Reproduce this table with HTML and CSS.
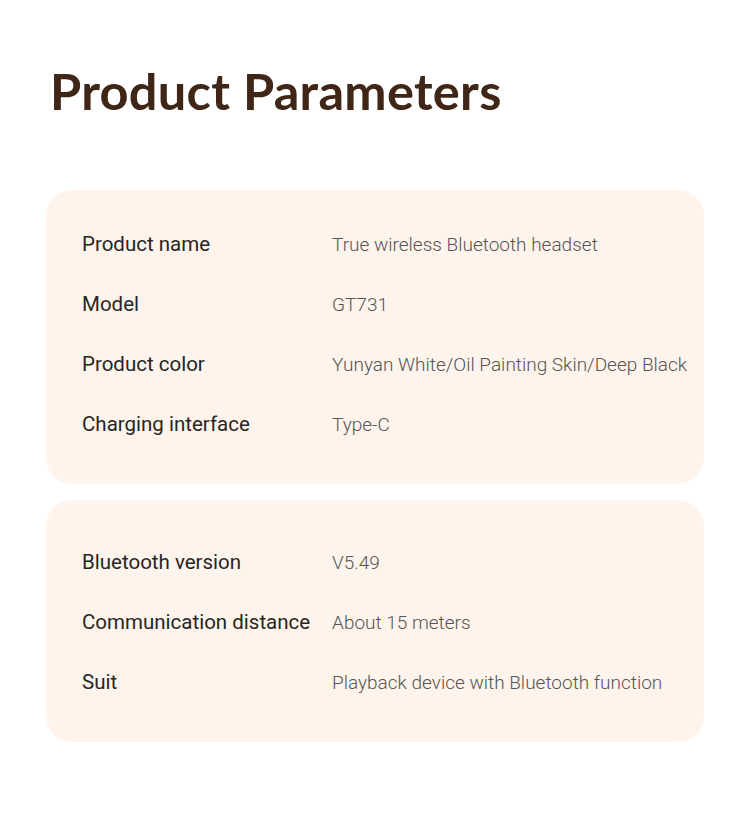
FILE: index.html
```html
<!DOCTYPE html>
<html>
<head>
<meta charset="utf-8">
<link rel="stylesheet" href="styles.css">
</head>
<body>
<div class="page">
  <h1 class="title">Product Parameters</h1>
  <div class="card card-a">
    <div class="row"><span class="label">Product name</span><span class="value">True wireless Bluetooth headset</span></div>
    <div class="row"><span class="label">Model</span><span class="value">GT731</span></div>
    <div class="row"><span class="label">Product color</span><span class="value">Yunyan White/Oil Painting Skin/Deep Black</span></div>
    <div class="row"><span class="label">Charging interface</span><span class="value">Type-C</span></div>
  </div>
  <div class="card card-b">
    <div class="row"><span class="label">Bluetooth version</span><span class="value">V5.49</span></div>
    <div class="row"><span class="label">Communication distance</span><span class="value">About 15 meters</span></div>
    <div class="row"><span class="label">Suit</span><span class="value">Playback device with Bluetooth function</span></div>
  </div>
</div>
</body>
</html>
```

FILE: styles.css
```css
html, body {
  margin: 0;
  padding: 0;
  background: #ffffff;
}
.page {
  width: 750px;
  height: 827px;
  box-sizing: border-box;
  padding: 59px 46px 0 46px;
  display: flex;
  flex-direction: column;
  font-family: Roboto, "Noto Sans", sans-serif;
}
.title {
  margin: 0 0 0 4px;
  font-family: Lato, "Open Sans", sans-serif;
  font-weight: 700;
  font-size: 50.5px;
  line-height: 64px;
  color: #3f2617;
  letter-spacing: 0.3px;
}
.card {
  background: #fef4eb;
  border-radius: 26px;
  display: flex;
  flex-direction: column;
  padding-left: 36px;
}
.card-a {
  margin-top: 67px;
  height: 294px;
  padding-top: 24px;
  box-sizing: border-box;
}
.card-b {
  margin-top: 16px;
  height: 242px;
  padding-top: 32px;
  box-sizing: border-box;
}
.row {
  height: 60px;
  display: flex;
  align-items: center;
}
.label {
  width: 250px;
  flex: none;
  font-size: 20.5px;
  color: #262626;
  font-weight: 400;
}
.value {
  font-size: 19px;
  color: #555555;
  font-weight: 300;
  white-space: nowrap;
}
```
